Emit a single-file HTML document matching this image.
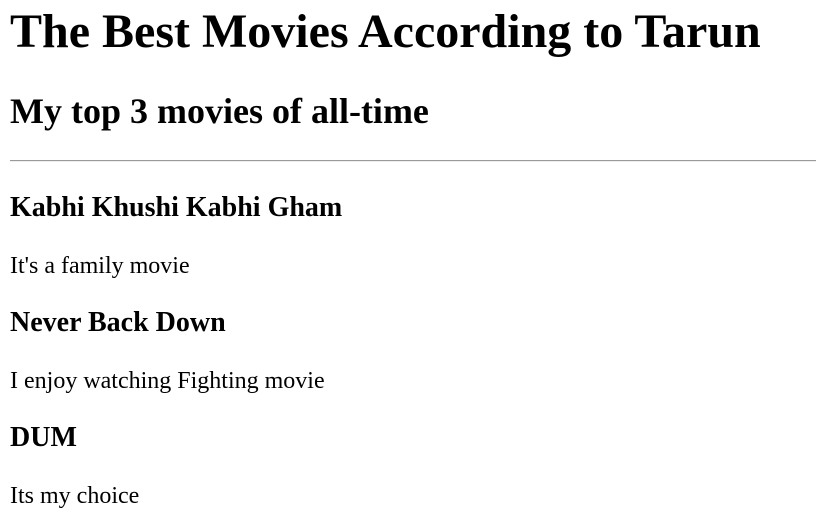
<!DOCTYPE html>
<html><head><style>
html,body{margin:0;padding:0;background:#fff;width:816px;height:531px;overflow:hidden;position:relative;font-family:"Liberation Serif","Times New Roman",serif;color:#000}
div{position:absolute;left:10px;white-space:nowrap}
.h1{font-size:48px;font-weight:bold;line-height:56px;top:4px}
.h2{font-size:36px;font-weight:bold;line-height:42px;top:90px}
.h3{font-size:28px;font-weight:bold;line-height:32px}
.p{font-size:24px;line-height:28px}
hr{position:absolute;left:10px;right:0;top:160px;margin:0;border:0;border-top:1px solid #9a9a9a;border-bottom:1px solid #eee;height:0}
</style></head><body>
<div class="h1">The Best Movies According to Tarun</div>
<div class="h2">My top 3 movies of all-time</div>
<hr>
<div class="h3" style="top:192px">Kabhi Khushi Kabhi Gham</div>
<div class="p" style="top:252px">It's a family movie</div>
<div class="h3" style="top:307px">Never Back Down</div>
<div class="p" style="top:367px">I enjoy watching Fighting movie</div>
<div class="h3" style="top:422px">DUM</div>
<div class="p" style="top:482px">Its my choice</div>
</body></html>
